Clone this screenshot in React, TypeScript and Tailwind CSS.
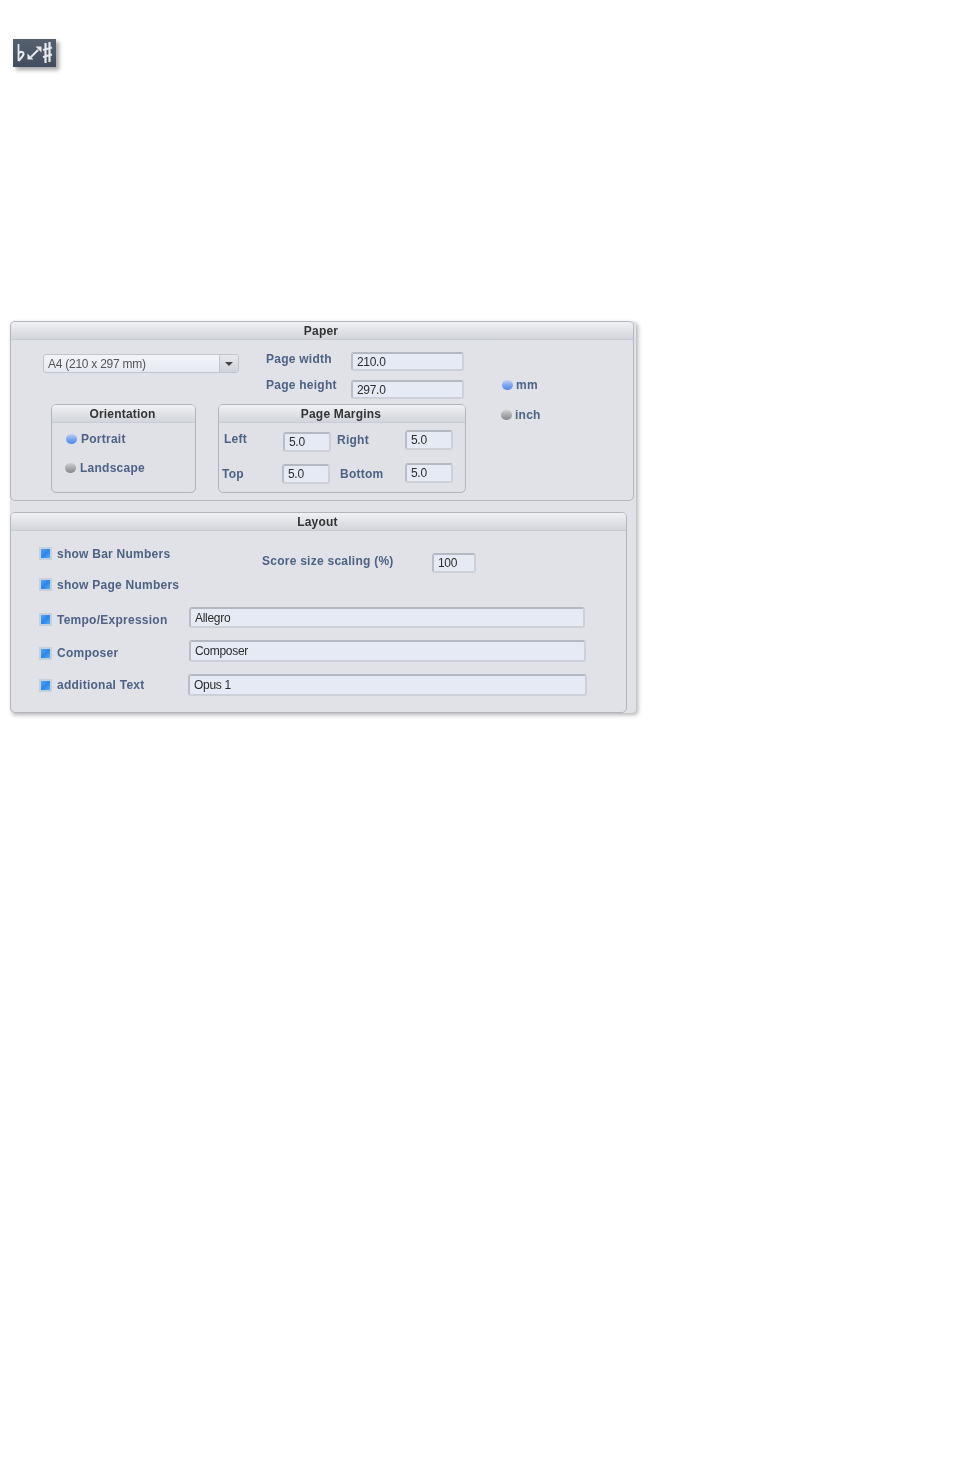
import React from "react";

const font = "font-['Liberation_Sans',Arial,sans-serif]";
const label = "text-[12px] font-bold text-[#4d6285] leading-none whitespace-nowrap tracking-[0.25px]";

function Field({ value, className }: { value: string; className: string }) {
  return (
    <div className={`flex items-center pl-[4px] shrink-0 rounded-[3px] border-2 border-t-[#b4b8c0] border-l-[#babdc5] border-r-[#cdd0d6] border-b-[#cdd0d6] bg-[#e6eaf4] text-[12px] text-[#2c2c2c] tracking-[-0.3px] ${className}`}>
      {value}
    </div>
  );
}

function Radio({ on, className = "" }: { on: boolean; className?: string }) {
  return (
    <span
      className={`block w-[11px] h-[10px] rounded-full shrink-0 ${
        on
          ? "bg-gradient-to-b from-[#c4d4f2] via-[#7ea5f0] to-[#4f86ee]"
          : "bg-gradient-to-b from-[#cfcfcf] to-[#85878a]"
      } ${className}`}
    />
  );
}

function Check() {
  return (
    <span className="block w-[13px] h-[13px] shrink-0 border-2 border-[#c3d0de] bg-gradient-to-br from-[#5aa6f2] via-[#2b86ea] to-[#56aaf7]" />
  );
}

function CheckRow({ text, className = "" }: { text: string; className?: string }) {
  return (
    <div className={`flex items-center gap-[5px] ${className}`}>
      <Check />
      <span className={label}>{text}</span>
    </div>
  );
}

function Header({ title, className = "" }: { title: string; className?: string }) {
  return (
    <div className={`flex items-center justify-center pt-[1px] pr-[2px] bg-gradient-to-b from-[#f0f1f4] to-[#d2d5db] border-b border-[#c9ccd2] text-[12px] tracking-[0.2px] font-bold text-[#333] rounded-t-[4px] ${className}`}>
      {title}
    </div>
  );
}

function Box({ title, className, children }: { title: string; className: string; children: React.ReactNode }) {
  return (
    <div className={`shrink-0 rounded-[5px] border border-[#b0b4bc] bg-[#dfe1e6] ${className}`}>
      <Header title={title} className="h-[18px]" />
      {children}
    </div>
  );
}

function AppIcon() {
  return (
    <div className="w-[43px] h-[28px] ml-[13px] bg-gradient-to-b from-[#56616f] to-[#414d5d] shadow-[3px_3px_4px_rgba(0,0,0,0.35)]">
      <svg width="43" height="28" viewBox="0 0 43 28" fill="none" stroke="#e6e9ee" strokeWidth="1.8">
        <path d="M5.5 5v17" />
        <path d="M5.5 14c3-2 5-1 5 1s-2.500 4-5 7" strokeWidth="2.2" />
        <path d="M18 18l7-7" strokeWidth="2" />
        <path d="M14.500 20.500v-6l6 6zM28.500 7.500v6l-6-6z" fill="#e6e9ee" stroke="none" />
        <path d="M32.500 4v20M36.500 3v20M30 11l9-2.500M30 18l9-2.500" strokeWidth="2.200" />
      </svg>
    </div>
  );
}

export default function App() {
  return (
    <div className={`${font} w-[962px] h-[1457px] bg-white overflow-hidden blur-[0.6px]`}>
      <div className="pt-[39px]">
        <AppIcon />
      </div>

      <div className="mt-[254px] ml-[10px] w-[626px] h-[392px] bg-[#e0e2e7] rounded-[4px] shadow-[2px_2px_4px_rgba(0,0,0,0.3)]">
        {/* Paper */}
        <div className="w-[624px] h-[180px] rounded-[5px] border border-[#b3b6bd]">
          <Header title="Paper" className="h-[18px]" />
          <div className="flex pl-[32px] pt-[12px]">
            <div className="w-[422px] shrink-0">
              <div className="flex h-[52px]">
                <div className="mt-[2px] w-[196px] h-[19px] flex rounded-[3px] border border-[#c0c4cc] bg-gradient-to-b from-[#f2f4f9] to-[#e6e9f0] overflow-hidden">
                  <span className="flex-1 pl-[4px] text-[12px] leading-[18px] text-[#555] tracking-[-0.25px]">A4 (210 x 297 mm)</span>
                  <span className="w-[19px] flex items-center justify-center border-l border-[#c0c4cc] bg-gradient-to-b from-[#e6e8ec] to-[#cfd2d8]">
                    <span className="block w-0 h-0 border-x-[4px] border-x-transparent border-t-[4px] border-t-[#444]" />
                  </span>
                </div>
                <div className="ml-[27px] w-[85px] shrink-0 pt-[1px]">
                  <div className={`${label} tracking-[0.1px]`}>Page width</div>
                  <div className={`${label} tracking-[0.1px] mt-[14px]`}>Page height</div>
                </div>
                <div className="flex flex-col gap-[9px]">
                  <Field value="210.0" className="w-[113px] h-[19px]" />
                  <Field value="297.0" className="w-[113px] h-[19px]" />
                </div>
              </div>

              <div className="flex pl-[8px] gap-[22px]">
                <Box title="Orientation" className="w-[145px] h-[89px]">
                  <div className="pl-[14px] pt-[10px]">
                    <div className="flex items-center gap-[4px] h-[12px]">
                      <Radio on />
                      <span className={label}>Portrait</span>
                    </div>
                    <div className="flex items-center gap-[4px] h-[12px] mt-[17px] -ml-[1px]">
                      <Radio on={false} />
                      <span className={label}>Landscape</span>
                    </div>
                  </div>
                </Box>

                <Box title="Page Margins" className="w-[248px] h-[89px]">
                  <div className="pl-[5px] pt-[8px]">
                    <div className="flex items-start">
                      <span className={`${label} w-[59px] pt-[2px]`}>Left</span>
                      <Field value="5.0" className="w-[48px] h-[20px] mt-[1px]" />
                      <span className={`${label} w-[68px] ml-[6px] pt-[3px]`}>Right</span>
                      <Field value="5.0" className="w-[48px] h-[20px] -mt-[1px]" />
                    </div>
                    <div className="flex items-start mt-[12px] -ml-[2px]">
                      <span className={`${label} w-[60px] pt-[4px]`}>Top</span>
                      <Field value="5.0" className="w-[48px] h-[20px]" />
                      <span className={`${label} w-[65px] ml-[10px] pt-[4px]`}>Bottom</span>
                      <Field value="5.0" className="w-[48px] h-[20px] -mt-[1px]" />
                    </div>
                  </div>
                </Box>
              </div>
            </div>

            <div className="ml-[36px] pt-[27px]">
              <div className="flex items-center gap-[3px] h-[12px] ml-[1px]">
                <Radio on />
                <span className={label}>mm</span>
              </div>
              <div className="flex items-center gap-[3px] h-[12px] mt-[18px]">
                <Radio on={false} />
                <span className={label}>inch</span>
              </div>
            </div>
          </div>
        </div>

        {/* Layout */}
        <div className="mt-[11px] w-[617px] h-[201px] rounded-[5px] border border-[#b3b6bd]">
          <Header title="Layout" className="h-[18px]" />
          <div className="pl-[28px]">
            <div className="flex items-start pt-[16px]">
              <div className="w-[223px] shrink-0">
                <CheckRow text="show Bar Numbers" />
                <CheckRow text="show Page Numbers" className="mt-[18px]" />
              </div>
              <span className={`${label} tracking-[0.1px] pt-[8px] w-[170px] shrink-0`}>Score size scaling (%)</span>
              <Field value="100" className="w-[44px] h-[20px] mt-[6px]" />
            </div>

            <div className="flex items-center mt-[16px] h-[21px]">
              <CheckRow text="Tempo/Expression" className="w-[150px] shrink-0 mt-[4px]" />
              <Field value="Allegro" className="w-[396px] h-[21px]" />
            </div>
            <div className="flex items-center mt-[12px] h-[22px]">
              <CheckRow text="Composer" className="w-[150px] shrink-0 mt-[4px]" />
              <Field value="Composer" className="w-[397px] h-[22px]" />
            </div>
            <div className="flex items-center mt-[12px] h-[22px]">
              <CheckRow text="additional Text" className="w-[149px] shrink-0" />
              <Field value="Opus 1" className="w-[399px] h-[22px]" />
            </div>
          </div>
        </div>
      </div>
    </div>
  );
}
